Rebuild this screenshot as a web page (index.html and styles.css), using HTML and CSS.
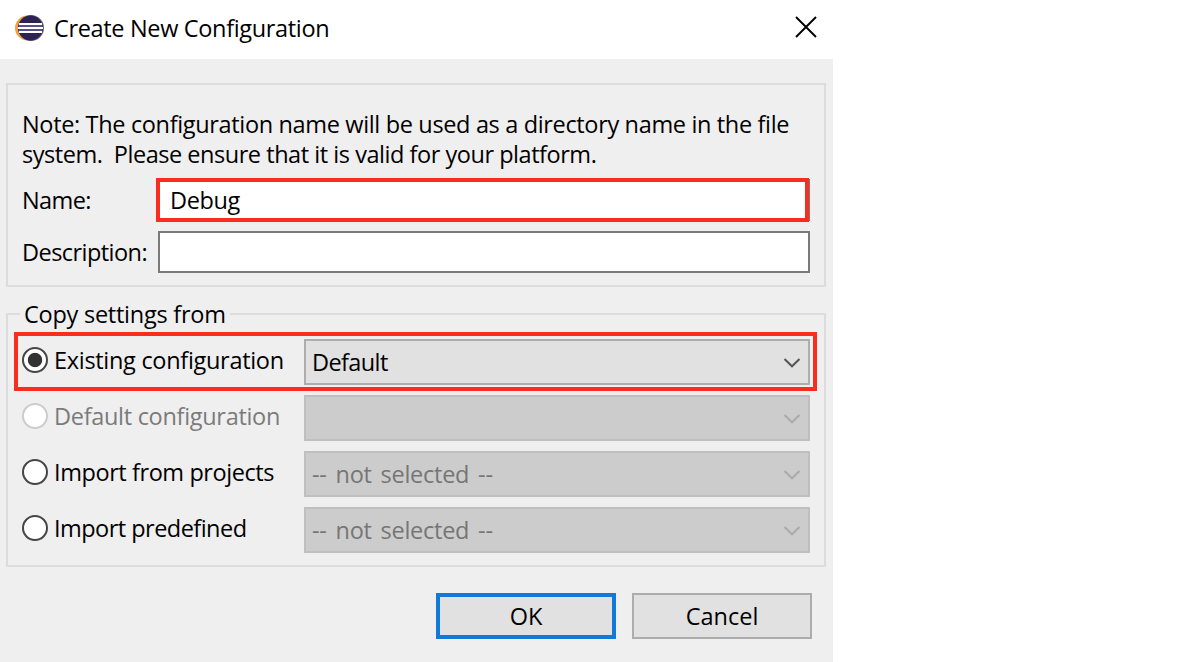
FILE: index.html
```html
<!DOCTYPE html>
<html lang="en">
<head>
<meta charset="utf-8">
<title>Create New Configuration</title>
<link rel="stylesheet" href="styles.css">
</head>
<body>
<svg class="defs" width="0" height="0" aria-hidden="true">
  <symbol id="chevron" viewBox="0 0 18 12"><path d="M1.5 2 L9 9.3 L16.5 2" fill="none" stroke="currentColor" stroke-width="2"/></symbol>
</svg>
<main class="dialog">
  <header class="titlebar">
    <svg class="logo" width="30" height="28" viewBox="0 0 30 28">
      <circle cx="12.5" cy="14" r="12.5" fill="#f7a13a"/>
      <circle cx="16" cy="14" r="13" fill="#69657c"/>
      <circle cx="15.5" cy="14" r="12.4" fill="#2c2255"/>
      <path d="M4 12h23M4 16h23" stroke="#55508a" stroke-width="2"/>
      <path d="M4 10h23M3 14h25M4 18h23" stroke="#fff" stroke-width="2"/>
    </svg>
    <h1 class="title"><span class="t-title">Create New Configuration</span></h1>
    <svg class="close" width="22" height="22" viewBox="0 0 22 22"><path d="M1 1 L21 21 M21 1 L1 21" stroke="#000" stroke-width="1.9"/></svg>
  </header>
  <div class="content">
    <section class="group details">
      <p class="note"><span class="t-note1">Note: The configuration name will be used as a directory name in the file</span><br><span class="t-note2">system.&nbsp; Please ensure that it is valid for your platform.</span></p>
      <div class="field name-field"><span class="label t-name">Name:</span><div class="input name-input"><span class="t-debug">Debug</span></div></div>
      <div class="field"><span class="label t-desc">Description:</span><div class="input"></div></div>
    </section>
    <section class="group copy">
      <h2 class="legend"><span class="t-copy">Copy settings from</span></h2>
      <div class="option current">
        <i class="radio checked"></i><span class="label t-existing">Existing configuration</span>
        <div class="combo"><span class="t-default">Default</span><svg class="chevron" width="18" height="12"><use href="#chevron"/></svg></div>
      </div>
      <div class="option disabled">
        <i class="radio"></i><span class="label t-defconf">Default configuration</span>
        <div class="combo off"><span></span><svg class="chevron" width="18" height="12"><use href="#chevron"/></svg></div>
      </div>
      <div class="option">
        <i class="radio"></i><span class="label t-projects">Import from projects</span>
        <div class="combo off"><span class="t-none">-- not selected --</span><svg class="chevron" width="18" height="12"><use href="#chevron"/></svg></div>
      </div>
      <div class="option">
        <i class="radio"></i><span class="label t-predef">Import predefined</span>
        <div class="combo off"><span class="t-none">-- not selected --</span><svg class="chevron" width="18" height="12"><use href="#chevron"/></svg></div>
      </div>
    </section>
    <footer class="actions">
      <div class="button primary"><span class="t-ok">OK</span></div>
      <div class="button"><span class="t-cancel">Cancel</span></div>
    </footer>
  </div>
</main>
</body>
</html>
```
FILE: styles.css
```css
* { box-sizing: border-box; }
body { margin: 0; background: #fff; font-family: "Open Sans", "Noto Sans", sans-serif; font-size: 23.5px; line-height: 30px; color: #000; overflow: hidden; }
h1, h2, p { margin: 0; font-size: inherit; font-weight: 400; }
span { white-space: nowrap; }
.defs { display: block; height: 0; }
.dialog { width: 833px; height: 662px; background: #efefef; }
.titlebar { display: flex; height: 59px; padding: 14px 16px 0 15px; background: #fff; align-items: flex-start; }
.title { flex: 1; margin: -1px 0 0 9px; }
.close { margin-top: 2px; }
.content { padding: 24px 7px 0 6px; }
.group { border: 2px solid #dcdcdc; }
.details { height: 204px; padding: 24px 14px 0; }
.note { height: 60px; margin-bottom: 10px; }
.field { display: flex; height: 42px; margin-bottom: 10px; align-items: center; }
.field .label { width: 136px; }
.input { position: relative; flex: 1; height: 42px; padding: 4px 10px; border: 2px solid #7a7a7a; background: #fff; }
.name-input::after { content: ""; position: absolute; inset: -3px -1px -3px -4px; border: 4px solid #fb2c1d; }
.copy { height: 254px; margin-top: 26px; padding: 0 14px; }
.legend { width: 210px; height: 30px; margin: -16px 0 10px -2px; padding-left: 4px; background: #efefef; position: relative; }
.option { position: relative; display: flex; height: 46px; margin-bottom: 10px; align-items: flex-start; }
.current::after { content: ""; position: absolute; inset: -7px -7px -6px -8px; border: 4px solid #fb2c1d; }
.option .label { width: 250px; margin-left: 6px; padding-top: 6px; }
.radio { width: 26px; height: 26px; margin-top: 8px; border: 2px solid #454545; border-radius: 50%; background: #fff; }
.checked { background: radial-gradient(circle, #333 6.7px, #fff 7.6px); }
.disabled { color: #7b7b7b; }
.disabled .radio { border-color: #ccc; }
.combo { display: flex; flex: 1; height: 46px; padding: 6px 7px 0 6px; border: 2px solid #adadad; background: #e1e1e1; color: #000; justify-content: space-between; }
.chevron { margin-top: 10px; color: #555; }
.off { background: #ccc; border-color: #bfbfbf; color: #767676; }
.off .chevron { color: #aaa; }
.actions { display: flex; justify-content: flex-end; gap: 16px; margin-top: 26px; padding-right: 14px; }
.button { width: 180px; height: 46px; padding-top: 6px; border: 2px solid #adadad; background: #e1e1e1; text-align: center; }
.primary { border: 4px solid #1279d9; padding-top: 4px; }

.t-title { letter-spacing: -.34px; }
.t-note1 { letter-spacing: -.345px; }
.t-note2 { letter-spacing: -.46px; }
.t-name { letter-spacing: -.6px; }
.t-debug { letter-spacing: -.4px; }
.t-desc { letter-spacing: -.55px; }
.t-copy { letter-spacing: -.25px; }
.t-existing, .t-defconf { letter-spacing: -.3px; }
.t-default { letter-spacing: -.6px; }
.t-projects { letter-spacing: -.42px; }
.t-predef { letter-spacing: -.53px; }
.t-none { letter-spacing: -.25px; word-spacing: 3px; }
```
